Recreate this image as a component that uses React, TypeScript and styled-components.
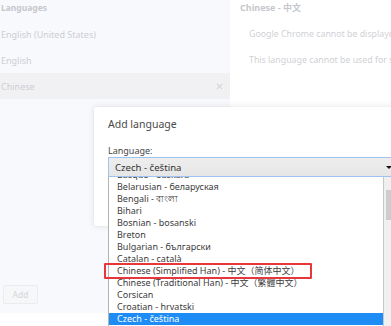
import React from "react";
import styled, { createGlobalStyle } from "styled-components";

const Global = createGlobalStyle`
  html, body { margin: 0; padding: 0; background: #ffffff; overflow: hidden; }
  body { width: 391px; height: 326px; font-family: "Noto Sans", "Noto Sans CJK SC", sans-serif; }
`;

const Page = styled.div`
  position: relative;
  width: 391px;
  height: 326px;
  overflow: hidden;
  background: #ffffff;
`;

const Settings = styled.div`
  display: flex;
  height: 313px;
`;

const LeftPanel = styled.div`
  width: 230px;
  background: #f8f9fd;
  display: flex;
  flex-direction: column;
`;

const PanelHeader = styled.div`
  height: 21px;
  padding-left: 1px;
  font-size: 8.5px;
  font-weight: 700;
  color: #c6c7cc;
  line-height: 15px;
  white-space: nowrap;
`;

const LangRow = styled.div<{ $active?: boolean }>`
  height: 26px;
  display: flex;
  align-items: center;
  justify-content: space-between;
  padding: 0 7px 0 1px;
  font-size: 9px;
  color: #cdced3;
  background: ${(p) => (p.$active ? "#f1f1f3" : "transparent")};
`;

const RemoveX = styled.svg`
  width: 7px;
  height: 7px;
`;

const LeftSpacer = styled.div`
  flex: 1;
`;

const AddButton = styled.div`
  margin: 0 0 9px 3px;
  width: 35px;
  height: 19px;
  box-sizing: border-box;
  border: 1px solid #ececef;
  border-radius: 2px;
  background: #f6f7f9;
  color: #d4d5d8;
  font-size: 8.5px;
  display: flex;
  align-items: center;
  justify-content: center;
`;

const RightPanel = styled.div`
  flex: 1;
  padding-left: 10px;
  display: flex;
  flex-direction: column;
  white-space: nowrap;
  overflow: hidden;
`;

const RightTitle = styled.div`
  height: 21px;
  font-size: 9px;
  font-weight: 700;
  color: #c6c7cc;
  line-height: 15px;
`;

const RightText = styled.div`
  height: 26px;
  padding-left: 9px;
  display: flex;
  align-items: center;
  font-size: 8.8px;
  color: #d0d1d5;
`;

const Dialog = styled.div`
  position: absolute;
  left: 94px;
  top: 107px;
  width: 330px;
  height: 119px;
  background: #ffffff;
  box-shadow: 0 0 7px rgba(0, 0, 0, 0.1), 0 0 1px rgba(0, 0, 0, 0.12);
  border-radius: 2px;
  padding: 10px 0 0 14px;
  box-sizing: border-box;
`;

const DialogTitle = styled.div`
  font-size: 10.5px;
  color: #4a4a4a;
  line-height: 15px;
`;

const FieldLabel = styled.div`
  margin-top: 13px;
  font-size: 9px;
  color: #444;
  line-height: 12px;
`;

const SelectBox = styled.div`
  height: 20px;
  box-sizing: border-box;
  border: 1px solid #9ec3ee;
  background: linear-gradient(#eeeeee, #e6e6e6);
  display: flex;
  align-items: center;
  padding-left: 6px;
  font-size: 9.6px;
  color: #333;
  position: relative;
`;

const Arrow = styled.span`
  position: absolute;
  left: 277px;
  top: 8px;
  width: 0;
  height: 0;
  border-left: 3px solid transparent;
  border-right: 3px solid transparent;
  border-top: 3.5px solid #111;
`;

const Popup = styled.div`
  position: absolute;
  left: 108px;
  top: 177px;
  width: 290px;
  height: 160px;
  display: flex;
  background: #fff;
  border-left: 1px solid #b4b4b4;
  box-sizing: border-box;
  overflow: hidden;
`;

const OptionList = styled.div`
  width: 274px;
  display: flex;
  flex-direction: column;
  margin-top: -8px;
  border-right: 1px solid #c8c8c8;
`;

const Option = styled.div<{ $selected?: boolean }>`
  height: 12px;
  line-height: 12px;
  padding-left: 8px;
  font-size: 9px;
  white-space: nowrap;
  color: ${(p) => (p.$selected ? "#ffffff" : "#3c3c3c")};
  background: ${(p) => (p.$selected ? "#1e8cf5" : "transparent")};
`;

const ScrollTrack = styled.div`
  width: 9px;
  background: #f0f0f0;
  display: flex;
  flex-direction: column;
  padding-top: 13px;
`;

const ScrollThumb = styled.div`
  margin-left: 2px;
  width: 7px;
  height: 30px;
  background: #cdcdcd;
`;

const Highlight = styled.div`
  position: absolute;
  left: 104px;
  top: 263px;
  width: 208px;
  height: 16px;
  box-sizing: border-box;
  border: 2px solid #e8373a;
  border-radius: 1px;
`;

const options = [
  "Basque - euskara",
  "Belarusian - беларуская",
  "Bengali - বাংলা",
  "Bihari",
  "Bosnian - bosanski",
  "Breton",
  "Bulgarian - български",
  "Catalan - català",
  "Chinese (Simplified Han) - 中文（简体中文）",
  "Chinese (Traditional Han) - 中文（繁體中文）",
  "Corsican",
  "Croatian - hrvatski",
  "Czech - čeština",
];

export default function App() {
  return (
    <Page>
      <Global />
      <Settings>
        <LeftPanel>
          <PanelHeader>Languages</PanelHeader>
          <LangRow>English (United States)</LangRow>
          <LangRow>English</LangRow>
          <LangRow $active>
            Chinese
            <RemoveX viewBox="0 0 8 8">
              <path d="M1 1 L7 7 M7 1 L1 7" stroke="#d4d4d7" strokeWidth="1.2" />
            </RemoveX>
          </LangRow>
          <LeftSpacer />
          <AddButton>Add</AddButton>
        </LeftPanel>
        <RightPanel>
          <RightTitle>Chinese - 中文</RightTitle>
          <RightText>Google Chrome cannot be displayed in this language</RightText>
          <RightText>This language cannot be used for spell checking</RightText>
        </RightPanel>
      </Settings>
      <Dialog>
        <DialogTitle>Add language</DialogTitle>
        <FieldLabel>Language:</FieldLabel>
        <SelectBox>
          Czech - čeština
          <Arrow />
        </SelectBox>
      </Dialog>
      <Popup>
        <OptionList>
          {options.map((o, i) => (
            <Option key={o} $selected={i === options.length - 1}>
              {o}
            </Option>
          ))}
        </OptionList>
        <ScrollTrack>
          <ScrollThumb />
        </ScrollTrack>
      </Popup>
      <Highlight />
    </Page>
  );
}
